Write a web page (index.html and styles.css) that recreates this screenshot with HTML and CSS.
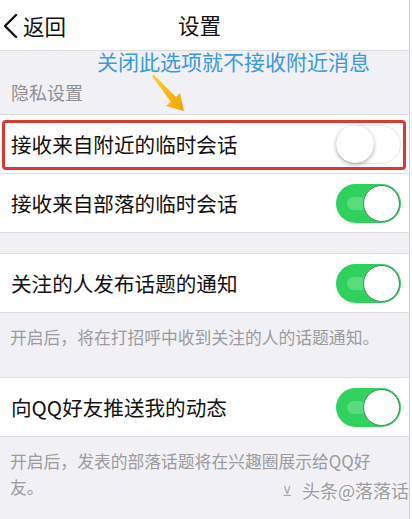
FILE: index.html
```html
<!DOCTYPE html>
<html lang="zh">
<head>
<meta charset="utf-8">
<title>设置</title>
<link rel="stylesheet" href="styles.css">
</head>
<body>
<div class="screen">
  <header class="nav">
    <a class="back">
      <svg class="chev" width="16" height="24" viewBox="0 0 16 24"><path d="M14 1 L3 12 L14 23" fill="none" stroke="#111" stroke-width="2.4" stroke-linecap="round" stroke-linejoin="round"/></svg>
      <span>返回</span>
    </a>
    <h1 class="title">设置</h1>
  </header>

  <div class="section-head">
    <p class="annot">关闭此选项就不接收附近消息</p>
    <svg class="arrow" width="40" height="42" viewBox="0 0 40 42">
      <defs>
        <linearGradient id="ag" x1="0" y1="0" x2="1" y2="1">
          <stop offset="0" stop-color="#ffcf2a"/>
          <stop offset="1" stop-color="#f3a200"/>
        </linearGradient>
      </defs>
      <path d="M4 3 L6 2 L28 24 L32 20 L36 38 L18 33 L23 29 Z" fill="url(#ag)"/>
    </svg>
    <p class="label">隐私设置</p>
  </div>

  <div class="group">
    <div class="row marked">
      <span class="text">接收来自附近的临时会话</span>
      <span class="switch off"><span class="knob"></span></span>
      <span class="mark"></span>
    </div>
    <div class="row">
      <span class="text">接收来自部落的临时会话</span>
      <span class="switch on"><span class="glow"></span><span class="knob"></span></span>
    </div>
  </div>

  <div class="spacer"></div>

  <div class="group">
    <div class="row">
      <span class="text">关注的人发布话题的通知</span>
      <span class="switch on"><span class="glow"></span><span class="knob"></span></span>
    </div>
  </div>
  <p class="note">开启后，将在打招呼中收到关注的人的话题通知。</p>

  <div class="group">
    <div class="row">
      <span class="text">向QQ好友推送我的动态</span>
      <span class="switch on"><span class="glow"></span><span class="knob"></span></span>
    </div>
  </div>
  <p class="note">开启后，发表的部落话题将在兴趣圈展示给QQ好友。</p>

  <div class="watermark"><span class="wm-icon">⊻</span><span>头条@落落话</span></div>
</div>
</body>
</html>
```

FILE: styles.css
```css
* { box-sizing: border-box; margin: 0; padding: 0; }

html, body {
  width: 412px;
  height: 519px;
  overflow: hidden;
  background: #ffffff;
}

body {
  font-family: "Noto Sans CJK SC", "Noto Sans", sans-serif;
  color: #111;
}

.screen {
  position: relative;
  width: 410px;
  height: 519px;
  background: #f1f1f5;
  border-right: 1px solid #cfcfd3;
}

.nav {
  position: relative;
  height: 51px;
  background: #fff;
  border-bottom: 1px solid #dcdce0;
  display: flex;
  align-items: center;
  justify-content: center;
}

.back {
  position: absolute;
  left: 2px;
  top: 0;
  height: 50px;
  display: flex;
  align-items: center;
  gap: 5px;
  font-size: 21.5px;
  color: #111;
}

.chev { display: block; margin-top: 1px; }

.title {
  font-size: 21.5px;
  font-weight: 400;
  line-height: 50px;
  margin-right: 10px;
}

.section-head {
  position: relative;
  height: 63px;
  padding: 28px 0 0 11px;
}

.annot {
  position: absolute;
  left: 97px;
  top: -3px;
  font-size: 21px;
  line-height: 26px;
  color: #3b9ada;
  white-space: nowrap;
}

.arrow {
  position: absolute;
  left: 148px;
  top: 22px;
}

.label {
  font-size: 18px;
  line-height: 26px;
  color: #8e8e93;
}

.group {
  background: #fff;
  border-top: 1px solid #dcdce0;
}

.row {
  position: relative;
  height: 59px;
  border-bottom: 1px solid #dcdce0;
  display: flex;
  align-items: center;
  justify-content: space-between;
  padding: 0 8px 0 11px;
}

.text {
  font-size: 20.6px;
  line-height: 28px;
  color: #111;
}

.mark {
  position: absolute;
  left: 2px;
  top: 5px;
  width: 404px;
  height: 50px;
  border: 3px solid #d93a31;
  border-radius: 4px;
  pointer-events: none;
}

.switch {
  position: relative;
  width: 65px;
  height: 39px;
  border-radius: 20px;
  flex: none;
}

.switch.off {
  background: #fff;
  border: 1.5px solid #e6e6e8;
}

.switch.off .knob {
  position: absolute;
  left: -1px;
  top: -1px;
  width: 38px;
  height: 38px;
  border-radius: 50%;
  background: #fff;
  box-shadow: 0 2px 4px rgba(0,0,0,0.28), 0 0 1px rgba(0,0,0,0.2);
}

.switch.on {
  background: #2fd25c;
}

.switch.on .glow {
  position: absolute;
  left: 11px;
  top: 13px;
  width: 20px;
  height: 13px;
  border-radius: 7px;
  background: #5bdc7c;
}

.switch.on .knob {
  position: absolute;
  right: 1px;
  top: 1px;
  width: 37px;
  height: 37px;
  border-radius: 50%;
  background: #fff;
  border: 1.5px solid #3d8a5a;
}

.spacer { height: 20px; }

.note {
  padding: 11px 24px 27px 10px;
  font-size: 16.8px;
  line-height: 26px;
  color: #9a9a9f;
}

.watermark {
  position: absolute;
  right: 0;
  top: 478px;
  display: flex;
  align-items: center;
  gap: 10px;
  font-size: 18px;
  line-height: 24px;
  color: #9c9ca0;
  text-shadow: 0 0 3px #fff;
}

.wm-icon { font-size: 14px; color: #aaa; }
```
